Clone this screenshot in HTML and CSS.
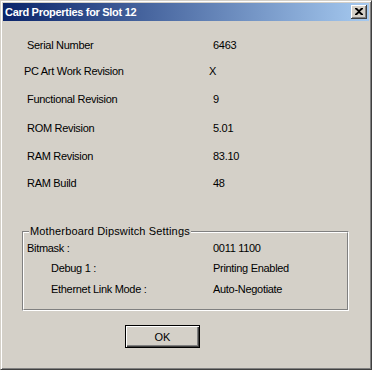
FILE: index.html
```html
<!DOCTYPE html>
<html>
<head>
<meta charset="utf-8">
<link rel="stylesheet" href="styles.css">
</head>
<body>
<div class="window">
  <div class="titlebar">
    <span class="title">Card Properties for Slot 12</span>
    <button class="close" aria-label="Close">
      <svg width="8" height="7" viewBox="0 0 8 7"><path d="M0 0h2l2 2 2-2h2v1L5 3.5 8 6v1H6L4 5 2 7H0V6l3-2.5L0 1z" fill="#000"/></svg>
    </button>
  </div>
  <div class="content">
    <div class="props">
      <div class="row r26"><span class="label">Serial Number</span><span class="value">6463</span></div>
      <div class="row r26"><span class="label shift">PC Art Work Revision</span><span class="value">X</span></div>
      <div class="row r30"><span class="label">Functional Revision</span><span class="value">9</span></div>
      <div class="row r28"><span class="label">ROM Revision</span><span class="value">5.01</span></div>
      <div class="row r28"><span class="label">RAM Revision</span><span class="value">83.10</span></div>
      <div class="row r26"><span class="label">RAM Build</span><span class="value">48</span></div>
    </div>
    <div class="group">
      <span class="legend">Motherboard Dipswitch Settings</span>
      <div class="group-inner">
        <div class="grow g20"><span class="glabel">Bitmask :</span><span class="gvalue">0011 1100</span></div>
        <div class="grow g20"><span class="glabel indent">Debug 1 :</span><span class="gvalue">Printing Enabled</span></div>
        <div class="grow g22"><span class="glabel indent">Ethernet Link Mode :</span><span class="gvalue">Auto-Negotiate</span></div>
      </div>
    </div>
    <div class="actions">
      <button class="ok">OK</button>
    </div>
  </div>
</div>
</body>
</html>
```
FILE: styles.css
```css
html, body {
  margin: 0;
  padding: 0;
  background: #d4d0c8;
}
body {
  font-family: "Liberation Sans", Arial, sans-serif;
  font-size: 11px;
  letter-spacing: -0.3px;
  color: #000;
}
.window {
  width: 372px;
  height: 370px;
  box-sizing: border-box;
  border: 1px solid;
  border-color: #d4d0c8 #404040 #404040 #d4d0c8;
  box-shadow: inset 1px 1px #fff, inset -1px -1px #808080;
  padding: 2px;
  background: #d4d0c8;
  display: flex;
  flex-direction: column;
}
.titlebar {
  height: 18px;
  flex: none;
  display: flex;
  align-items: center;
  justify-content: space-between;
  padding: 0 2px 0 2px;
  background: linear-gradient(to right, #0a246a, #a6caf0);
}
.title {
  color: #fff;
  font-weight: bold;
  font-size: 11px;
  letter-spacing: -0.3px;
  line-height: 18px;
}
.close {
  width: 16px;
  height: 14px;
  padding: 0;
  margin: 0;
  background: #d4d0c8;
  border: none;
  box-shadow: inset -1px -1px #404040, inset 1px 1px #fff, inset -2px -2px #808080;
  display: flex;
  align-items: center;
  justify-content: center;
  padding-bottom: 1px;
  padding-right: 1px;
}
.close svg { display: block; }
.content {
  flex: 1;
  display: flex;
  flex-direction: column;
}
.props {
  margin-top: 11px;
  display: flex;
  flex-direction: column;
}
.row {
  display: flex;
  align-items: center;
}
.r26 { height: 26px; }
.r28 { height: 28px; }
.r30 { height: 30px; }
.label {
  width: 210px;
  padding-left: 24px;
  box-sizing: border-box;
  flex: none;
}
.label.shift { padding-left: 21px; width: 206px; }
.group {
  position: relative;
  margin: 35px 0 0 19px;
  width: 327px;
  box-sizing: border-box;
  border-left: 1px solid #808080;
  border-top: 1px solid #808080;
  border-right: 1px solid #fff;
  border-bottom: 1px solid #fff;
}
.group-inner {
  border-left: 1px solid #fff;
  border-top: 1px solid #fff;
  border-right: 1px solid #808080;
  border-bottom: 1px solid #808080;
  padding: 5px 0 9px 3px;
}
.legend {
  position: absolute;
  left: 6px;
  top: -7px;
  padding: 0 1px 0 1px;
  background: #d4d0c8;
  line-height: 13px;
  letter-spacing: 0.15px;
}
.grow {
  display: flex;
  align-items: center;
}
.g20 { height: 20px; }
.g22 { height: 22px; }
.glabel {
  width: 186px;
  flex: none;
}
.glabel.indent { padding-left: 24px; box-sizing: border-box; }
.actions {
  margin-top: 14px;
  padding-left: 122px;
}
.ok {
  width: 75px;
  height: 23px;
  box-sizing: border-box;
  border: 1px solid #000;
  background: #d4d0c8;
  box-shadow: inset 1px 1px #fff, inset -1px -1px #404040, inset -2px -2px #808080;
  font-family: "Liberation Sans", Arial, sans-serif;
  font-size: 11px;
  color: #000;
  padding: 0;
  margin: 0;
}
```
